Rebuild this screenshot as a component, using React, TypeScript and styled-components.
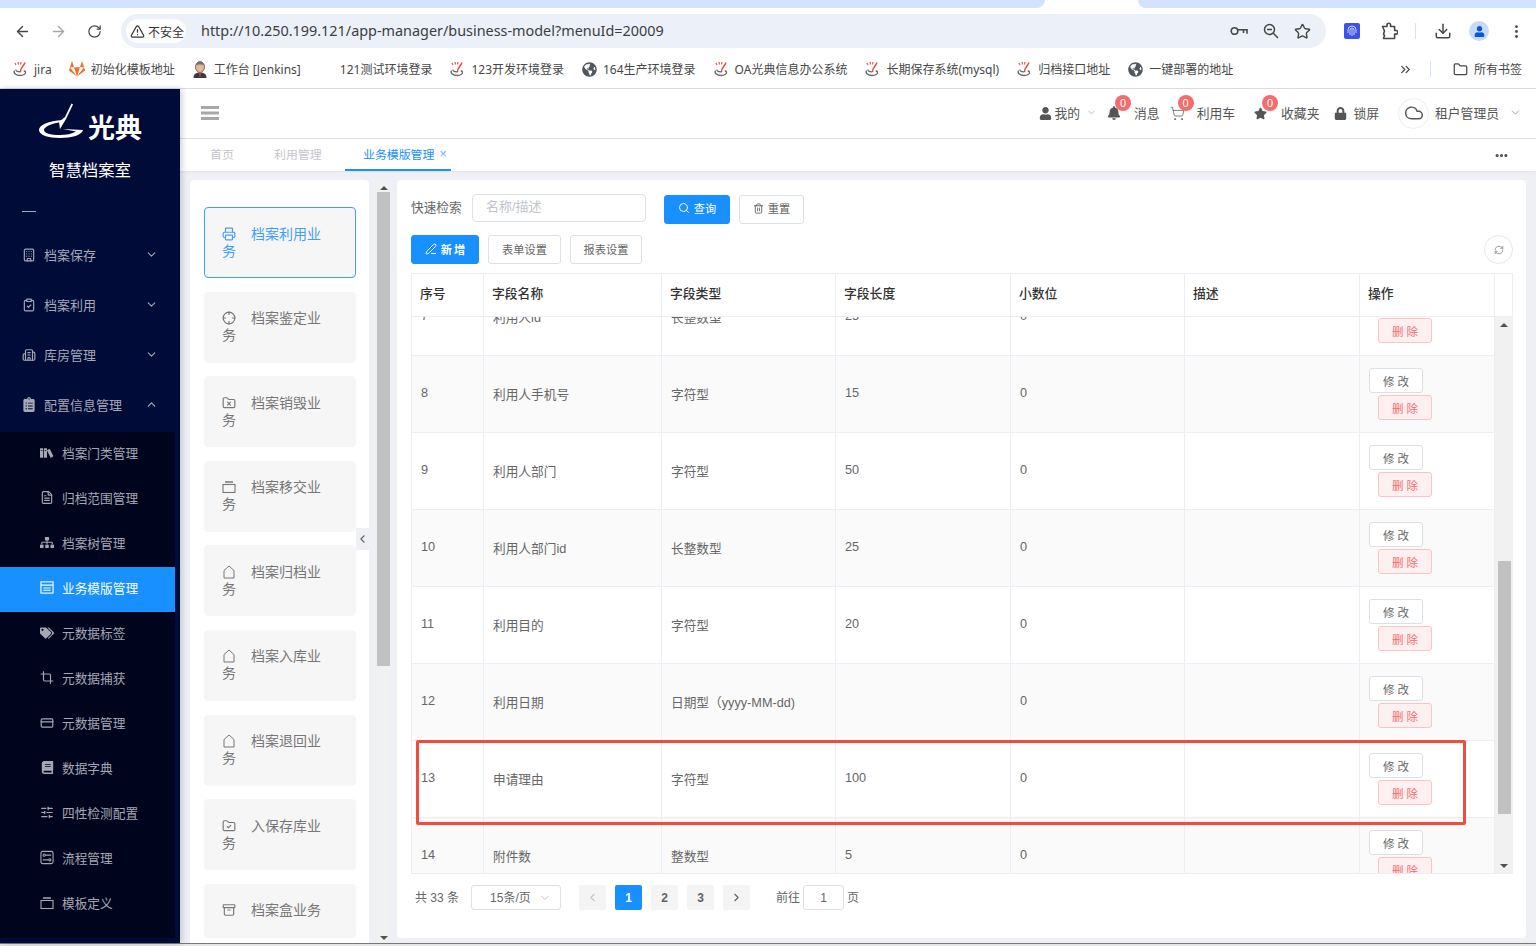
import React from "react";
import styled, { createGlobalStyle } from "styled-components";
import {
  ArrowLeft,
  ArrowRight,
  Archive,
  Building,
  Building2,
  ChevronDown,
  ChevronLeft,
  ChevronRight,
  ChevronUp,
  ChevronsRight,
  ClipboardCheck,
  Crop,
  CreditCard,
  Crosshair,
  Cloud,
  Download,
  Ellipsis,
  EllipsisVertical,
  FileText,
  Folder,
  FolderCheck,
  FolderX,
  PenLine,
  Printer,
  RefreshCw,
  RotateCw,
  Search,
  ShoppingCart,
  SlidersHorizontal,
  Star,
  Trash2,
  TriangleAlert,
} from "lucide-react";
import { FaBell, FaBook, FaClipboardList, FaGitlab, FaGlobeAmericas, FaLock, FaSitemap, FaStar, FaTags, FaUser } from "react-icons/fa";
import { ImBooks } from "react-icons/im";

const CJK = `"Liberation Sans", "Noto Sans CJK SC", sans-serif`;

const GlobalStyle = createGlobalStyle`
  html, body {
    margin: 0;
    padding: 0;
    background: #fff;
  }
  body {
    font-family: ${CJK};
    overflow: hidden;
  }
  * {
    box-sizing: border-box;
  }
`;

function SwirlIcon() {
  return (
    <svg width="16" height="16" viewBox="0 0 16 16" fill="none">
      <path d="M3 2l1 2M6 1l.5 2.500M9 1L8.500 3.500" stroke="#e2504a" strokeWidth="1.2" />
      <path d="M13 1.500C12 5 8 7 8.500 11" stroke="#e2504a" strokeWidth="1.5" />
      <path d="M2.500 9.500C1 12 4 14.500 8 14.500c3.500 0 6-1.500 5.500-3.500-.2-.8-1-1-1.800-1M4 8.500c-.5 1.800 2 2.500 4.500 2.300" stroke="#666" strokeWidth="1.300" />
    </svg>
  );
}

function JenkinsIcon() {
  return (
    <svg width="16" height="17" viewBox="0 0 16 17">
      <path d="M1.500 17c0-4 2.500-5.500 6.500-5.500s6.500 1.500 6.500 5.500z" fill="#3c3a3e" />
      <path d="M7 11.500h2L8.500 16h-1z" fill="#c8413b" />
      <ellipse cx="8" cy="6" rx="4.500" ry="5.500" fill="#e3b89a" stroke="#6b5548" strokeWidth="0.8" />
      <path d="M4 4.500C4.500 1.500 6 .5 8 .5s3.500 1 4 4C10 3 6 3 4 4.500z" fill="#77706a" />
    </svg>
  );
}

function GlobeIcon() {
  return <FaGlobeAmericas size={15} color="#50555b" />;
}

function ChromeKeyIcon() {
  return (
    <svg width="18" height="12" viewBox="0 0 18 12" fill="none" stroke="currentColor" strokeWidth="1.600">
      <circle cx="4.500" cy="6" r="3.300" />
      <path d="M8 4.800h9v4M13.500 5v3" />
    </svg>
  );
}

function ChromeZoomIcon() {
  return (
    <svg width="16" height="16" viewBox="0 0 16 16" fill="none" stroke="currentColor" strokeWidth="1.500">
      <circle cx="6.500" cy="6.500" r="5" />
      <path d="M10.300 10.300L15 15M4 6.500h5" />
    </svg>
  );
}

function ChromePuzzleIcon() {
  return (
    <svg width="18" height="18" viewBox="0 0 18 18" fill="none" stroke="currentColor" strokeWidth="1.600" strokeLinejoin="round">
      <path d="M2.500 4.500H7V3a1.800 1.800 0 0 1 3.600 0v1.500h4v4H16a1.800 1.800 0 0 1 0 3.600h-1.400v4.400H3.500l1-3-1-1.500 1-3z" />
    </svg>
  );
}

function ExtensionGlyph() {
  return (
    <svg width="10" height="12" viewBox="0 0 10 12" fill="none" stroke="#cfe0ff" strokeWidth="0.9">
      <path d="M1 8V5a4 4 0 0 1 8 0v3M3 10V5a2 2 0 0 1 4 0v5M5 4v7" />
    </svg>
  );
}

function HamburgerIcon() {
  return (
    <svg width="18" height="14" viewBox="0 0 18 14" fill="#a8a8a8">
      <rect width="18" height="3" />
      <rect y="5.500" width="18" height="3" />
      <rect y="11" width="18" height="3" />
    </svg>
  );
}

function HouseIcon() {
  return (
    <svg width="14" height="14" viewBox="0 0 14 14" fill="none" stroke="currentColor" strokeWidth="1">
      <path d="M2 13V5.500L7 1l5 4.500V13z" strokeLinejoin="round" />
    </svg>
  );
}

function TrayIcon() {
  return (
    <svg width="14" height="14" viewBox="0 0 14 14" fill="none" stroke="currentColor" strokeWidth="1.100">
      <rect x="1" y="4.500" width="12" height="8" />
      <path d="M3 2h8" strokeWidth="1.500" />
    </svg>
  );
}

function ModelIcon() {
  return (
    <svg width="15" height="15" viewBox="0 0 15 15" fill="none" stroke="currentColor" strokeWidth="1.200">
      <rect x="1" y="1.500" width="13" height="12" />
      <path d="M1 5h13M3.500 8h8M3.500 10.500h8" />
    </svg>
  );
}

function FlowIcon() {
  return (
    <svg width="15" height="15" viewBox="0 0 15 15" fill="none" stroke="currentColor" strokeWidth="1.200">
      <rect x="1" y="1" width="13" height="13" rx="2" />
      <circle cx="4.500" cy="5" r="1.200" />
      <circle cx="10.500" cy="10" r="1.200" />
      <path d="M6 5h6M3 10h6" />
    </svg>
  );
}

function BrandMark() {
  return (
    <svg width="48" height="40" viewBox="0 0 48 40" fill="#fff">
      <path d="M27 18C12 19 3 23 3 28c0 5 9 8 21 8s22-3 23-8l-20-1 13 2.500C36 32 30 33 24 33c-10 0-16-2-16-5 0-3 7-7 19-8z" />
      <path d="M35.500 1.500L37 2.500 30 17l-6 10-1-7 6-5z" />
    </svg>
  );
}

const bookmarks: { icon: React.ReactNode; label: string }[] = [
  { icon: <SwirlIcon />, label: "jira" },
  { icon: <FaGitlab size={16} color="#ee6f2b" />, label: "初始化模板地址" },
  { icon: <JenkinsIcon />, label: "工作台 [Jenkins]" },
  { icon: null, label: "121测试环境登录" },
  { icon: <SwirlIcon />, label: "123开发环境登录" },
  { icon: <GlobeIcon />, label: "164生产环境登录" },
  { icon: <SwirlIcon />, label: "OA光典信息办公系统" },
  { icon: <SwirlIcon />, label: "长期保存系统(mysql)" },
  { icon: <SwirlIcon />, label: "归档接口地址" },
  { icon: <GlobeIcon />, label: "一键部署的地址" },
];

const mainMenu = [
  { icon: <Building size={16} />, label: "档案保存", open: false },
  { icon: <ClipboardCheck size={16} />, label: "档案利用", open: false },
  { icon: <Building2 size={16} />, label: "库房管理", open: false },
  { icon: <FaClipboardList size={15} />, label: "配置信息管理", open: true },
];

const subMenu = [
  { icon: <ImBooks size={16} />, label: "档案门类管理" },
  { icon: <FileText size={15} />, label: "归档范围管理" },
  { icon: <FaSitemap size={15} />, label: "档案树管理" },
  { icon: <ModelIcon />, label: "业务模版管理", active: true },
  { icon: <FaTags size={16} />, label: "元数据标签" },
  { icon: <Crop size={15} />, label: "元数据捕获" },
  { icon: <CreditCard size={16} />, label: "元数据管理" },
  { icon: <FaBook size={13} />, label: "数据字典" },
  { icon: <SlidersHorizontal size={15} />, label: "四性检测配置" },
  { icon: <FlowIcon />, label: "流程管理" },
  { icon: <TrayIcon />, label: "模板定义" },
];

const businessCards = [
  { icon: <Printer size={14} />, label: "档案利用业务", active: true },
  { icon: <Crosshair size={14} />, label: "档案鉴定业务" },
  { icon: <FolderX size={14} />, label: "档案销毁业务" },
  { icon: <TrayIcon />, label: "档案移交业务" },
  { icon: <HouseIcon />, label: "档案归档业务" },
  { icon: <HouseIcon />, label: "档案入库业务" },
  { icon: <HouseIcon />, label: "档案退回业务" },
  { icon: <FolderCheck size={14} />, label: "入保存库业务" },
  { icon: <Archive size={14} />, label: "档案盒业务" },
];

const columns = ["序号", "字段名称", "字段类型", "字段长度", "小数位", "描述", "操作"];
const columnWidths = [72, 178, 174, 175, 174, 175, 135];

const fields = [
  { no: 7, name: "利用人id", type: "长整数型", length: "25" },
  { no: 8, name: "利用人手机号", type: "字符型", length: "15" },
  { no: 9, name: "利用人部门", type: "字符型", length: "50" },
  { no: 10, name: "利用人部门id", type: "长整数型", length: "25" },
  { no: 11, name: "利用目的", type: "字符型", length: "20" },
  { no: 12, name: "利用日期", type: "日期型（yyyy-MM-dd)", length: "" },
  { no: 13, name: "申请理由", type: "字符型", length: "100" },
  { no: 14, name: "附件数", type: "整数型", length: "5" },
];

function ColGroup() {
  return (
    <colgroup>
      {columnWidths.map((w, i) => (
        <col key={i} width={w} />
      ))}
    </colgroup>
  );
}

export default function App() {
  return (
    <Page>
      <GlobalStyle />
      <TabStrip>
        <StripSegment $side="left" />
        <ActiveBrowserTab />
        <StripSegment $side="right" />
      </TabStrip>

      <Toolbar>
        <NavButton><ArrowLeft size={17} /></NavButton>
        <NavButton $dim><ArrowRight size={17} /></NavButton>
        <NavButton><RotateCw size={15} /></NavButton>
        <AddressBar>
          <SecurityChip>
            <TriangleAlert size={15} />
            不安全
          </SecurityChip>
          <UrlText>http://10.250.199.121/app-manager/business-model?menuId=20009</UrlText>
          <AddressIcons>
            <ChromeKeyIcon />
            <ChromeZoomIcon />
            <Star size={17} />
          </AddressIcons>
        </AddressBar>
        <ToolbarIcons>
          <ExtensionBadge><ExtensionGlyph /></ExtensionBadge>
          <ChromePuzzleIcon />
          <ToolbarDivider />
          <Download size={18} />
          <ProfileBubble><FaUser size={11} /></ProfileBubble>
          <EllipsisVertical size={17} />
        </ToolbarIcons>
      </Toolbar>

      <BookmarkBar>
        {bookmarks.map((b) => (
          <Bookmark key={b.label}>
            <BookmarkIcon>{b.icon}</BookmarkIcon>
            {b.label}
          </Bookmark>
        ))}
        <BookmarkEnd>
          <ChevronsRight size={15} />
          <ToolbarDivider />
          <Bookmark>
            <Folder size={15} />
            所有书签
          </Bookmark>
        </BookmarkEnd>
      </BookmarkBar>

      <AppFrame>
        <Sidebar>
          <BrandBlock>
            <BrandRow>
              <BrandMark />
              <BrandName>光典</BrandName>
            </BrandRow>
            <BrandTitle>智慧档案室</BrandTitle>
          </BrandBlock>
          <SideDash />
          {mainMenu.map((m) => (
            <MenuItem key={m.label}>
              <MenuIcon>{m.icon}</MenuIcon>
              <MenuLabel>{m.label}</MenuLabel>
              {m.open ? <ChevronUp size={13} /> : <ChevronDown size={13} />}
            </MenuItem>
          ))}
          <SubMenu>
            {subMenu.map((s) => (
              <SubItem key={s.label} $active={s.active}>
                <MenuIcon>{s.icon}</MenuIcon>
                {s.label}
              </SubItem>
            ))}
          </SubMenu>
        </Sidebar>

        <MainColumn>
          <TopBar>
            <HamburgerIcon />
            <TopActions>
              <TopAction $gap={2}>
                <FaUser size={13} />
                <span>我的</span>
                <AccountChevron><ChevronDown size={11} strokeWidth={1.5} /></AccountChevron>
              </TopAction>
              <TopAction $offset={10} $gap={13}>
                <FaBell size={14} />
                <Badge>0</Badge>
                <span>消息</span>
              </TopAction>
              <TopAction $offset={10} $gap={12}>
                <ShoppingCart size={15} strokeWidth={1.2} />
                <Badge>0</Badge>
                <span>利用车</span>
              </TopAction>
              <TopAction $offset={19} $gap={14}>
                <FaStar size={13} />
                <Badge>0</Badge>
                <span>收藏夹</span>
              </TopAction>
              <TopAction $offset={15}>
                <FaLock size={13} />
                <span>锁屏</span>
              </TopAction>
              <TopAction $offset={19} $gap={6}>
                <AvatarCircle><Cloud size={20} strokeWidth={1.8} /></AvatarCircle>
                <span>租户管理员</span>
                <AccountChevron><ChevronDown size={13} strokeWidth={1.5} /></AccountChevron>
              </TopAction>
            </TopActions>
          </TopBar>

          <PageTabs>
            <PageTab $width={64}>首页</PageTab>
            <PageTab $width={71}>利用管理</PageTab>
            <PageTab $width={106} $active>
              业务模版管理
              <TabClose>×</TabClose>
            </PageTab>
            <TabMore><Ellipsis size={15} strokeWidth={3} /></TabMore>
          </PageTabs>

          <Content>
            <BusinessPanel>
              {businessCards.map((c) => (
                <BusinessCard key={c.label} $active={c.active}>
                  <CardIcon>{c.icon}</CardIcon>
                  {c.label}
                </BusinessCard>
              ))}
              <CollapseHandle><ChevronLeft size={14} /></CollapseHandle>
            </BusinessPanel>

            <PanelScrollbar>
              <ArrowUp />
              <PanelThumb />
              <ArrowDown />
            </PanelScrollbar>

            <TablePanel>
              <SearchRow>
                <FieldLabel>快速检索</FieldLabel>
                <SearchInput placeholder="名称/描述" />
                <ActionButton $primary $width={66} $offset={18}>
                  <Search size={12} />
                  查询
                </ActionButton>
                <ActionButton $width={65} $offset={9}>
                  <Trash2 size={11} />
                  重置
                </ActionButton>
              </SearchRow>

              <ActionRow>
                <ActionButton $primary $width={68}>
                  <PenLine size={12} />
                  <SpacedBold>新增</SpacedBold>
                </ActionButton>
                <ActionButton $width={73} $offset={9}>表单设置</ActionButton>
                <ActionButton $width={72} $offset={9}>报表设置</ActionButton>
                <RefreshCircle><RefreshCw size={10} /></RefreshCircle>
              </ActionRow>

              <TableFrame>
                <HeadRow>
                  <GridTable>
                    <ColGroup />
                    <thead>
                      <tr>
                        {columns.map((c) => (
                          <HeadCell key={c}>{c}</HeadCell>
                        ))}
                      </tr>
                    </thead>
                  </GridTable>
                  <HeadGutter />
                </HeadRow>
                <BodyRow>
                  <BodyViewport>
                    <ScrolledTable>
                      <ColGroup />
                      <tbody>
                        {fields.map((f) => (
                          <FieldRow key={f.no} $striped={f.no % 2 === 0}>
                            <BodyCell>{f.no}</BodyCell>
                            <BodyCell>{f.name}</BodyCell>
                            <BodyCell>{f.type}</BodyCell>
                            <BodyCell>{f.length}</BodyCell>
                            <BodyCell>0</BodyCell>
                            <BodyCell />
                            <ActionCell>
                              <RowActions>
                                <EditButton>修 改</EditButton>
                                <DeleteButton>删 除</DeleteButton>
                              </RowActions>
                            </ActionCell>
                          </FieldRow>
                        ))}
                      </tbody>
                    </ScrolledTable>
                  </BodyViewport>
                  <TableScrollbar>
                    <ArrowUp />
                    <TableTrack>
                      <TableThumb />
                    </TableTrack>
                    <ArrowDown />
                  </TableScrollbar>
                </BodyRow>
              </TableFrame>

              <Pagination>
                <PagerText>共 33 条</PagerText>
                <PageSize>
                  <span>15条/页</span>
                  <ChevronDown size={12} color="#c0c4cc" />
                </PageSize>
                <PageButton $offset={18} $disabled><ChevronLeft size={13} /></PageButton>
                <PageButton $active>1</PageButton>
                <PageButton>2</PageButton>
                <PageButton>3</PageButton>
                <PageButton><ChevronRight size={13} /></PageButton>
                <PagerText $offset={26}>前往</PagerText>
                <PageJump>1</PageJump>
                <PagerText $offset={3}>页</PagerText>
              </Pagination>

              <Highlight />
            </TablePanel>
          </Content>
        </MainColumn>
      </AppFrame>
      <BottomEdge />
    </Page>
  );
}

const Page = styled.div`
  width: 1536px;
  height: 946px;
  display: flex;
  flex-direction: column;
  overflow: hidden;
`;

const TabStrip = styled.div`
  height: 8px;
  display: flex;
  background: #fff;
  flex-shrink: 0;
`;

const StripSegment = styled.div<{ $side: "left" | "right" }>`
  flex: ${(p) => (p.$side === "left" ? "0 0 1045px" : "1")};
  background: #d3e3fd;
  border-radius: ${(p) => (p.$side === "left" ? "0 0 8px 0" : "0 0 0 8px")};
`;

const ActiveBrowserTab = styled.div`
  width: 93px;
  background: #fff;
`;

const Toolbar = styled.div`
  height: 47px;
  flex-shrink: 0;
  display: flex;
  align-items: flex-start;
  padding: 6px 0 0 4px;
  background: #fff;
  color: #474747;
`;

const NavButton = styled.div<{ $dim?: boolean }>`
  width: 36px;
  height: 34px;
  display: flex;
  align-items: center;
  justify-content: center;
  color: ${(p) => (p.$dim ? "#a4a6a9" : "#474747")};
`;

const AddressBar = styled.div`
  width: 1205px;
  height: 34px;
  margin-left: 9px;
  padding: 0 15px 0 5px;
  border-radius: 17px;
  background: #ebf0f9;
  display: flex;
  align-items: center;
`;

const SecurityChip = styled.div`
  width: 60px;
  height: 24px;
  border-radius: 12px;
  background: #fff;
  display: flex;
  align-items: center;
  gap: 3px;
  padding-left: 4px;
  font-size: 12px;
  color: #333;
`;

const UrlText = styled.div`
  margin: -2px 0 0 15px;
  font-family: "Noto Sans", sans-serif;
  font-size: 14.400px;
  color: #3b3e42;
`;

const AddressIcons = styled.div`
  margin-left: auto;
  display: flex;
  align-items: center;
  gap: 15px;
`;

const ToolbarIcons = styled.div`
  height: 34px;
  margin-left: 18px;
  display: flex;
  align-items: center;

  & > svg:nth-child(2) {
    margin-left: 20px;
  }
  & > svg:nth-child(4) {
    margin-left: 18px;
  }
  & > svg:nth-child(6) {
    margin-left: 19px;
  }
`;

const ExtensionBadge = styled.div`
  width: 16px;
  height: 16px;
  border-radius: 2px;
  background: #3f51e6;
  display: flex;
  align-items: center;
  justify-content: center;
`;

const ToolbarDivider = styled.div`
  width: 1px;
  height: 16px;
  margin-left: 17px;
  background: #d3e3fd;
`;

const ProfileBubble = styled.div`
  width: 20px;
  height: 20px;
  margin-left: 17px;
  border-radius: 50%;
  background: #c9daf8;
  color: #0b57d0;
  display: flex;
  align-items: center;
  justify-content: center;
`;

const BookmarkBar = styled.div`
  height: 34px;
  flex-shrink: 0;
  display: flex;
  align-items: center;
  gap: 17px;
  padding: 0 14px 5px 12px;
  background: #fff;
  border-bottom: 1px solid #dcdcdc;
`;

const Bookmark = styled.div`
  display: flex;
  align-items: center;
  gap: 6px;
  font-family: "Noto Sans", "Noto Sans CJK SC", sans-serif;
  font-size: 12px;
  color: #474747;
  white-space: nowrap;
`;

const BookmarkIcon = styled.span`
  width: 16px;
  height: 16px;
  display: flex;
  align-items: center;
  justify-content: center;
`;

const BookmarkEnd = styled.div`
  margin-left: auto;
  display: flex;
  align-items: center;
  color: #474747;

  & > div:last-child {
    margin-left: 22px;
  }
`;

const AppFrame = styled.div`
  height: 854px;
  flex-shrink: 0;
  display: flex;
`;

const Sidebar = styled.aside`
  width: 180px;
  flex-shrink: 0;
  background: #000b38;
  color: #a5a8b4;
  display: flex;
  flex-direction: column;
  box-shadow: 2px 0 6px rgba(0, 21, 41, 0.2);
  z-index: 1;
`;

const BrandBlock = styled.div`
  height: 111px;
  padding-top: 13px;
  display: flex;
  flex-direction: column;
  align-items: center;
`;

const BrandRow = styled.div`
  height: 40px;
  display: flex;
  align-items: flex-end;
  gap: 4px;
  margin-left: -2px;
`;

const BrandName = styled.div`
  margin-bottom: -2px;
  font-size: 27px;
  line-height: 30px;
  font-weight: 700;
  color: #fff;
`;

const BrandTitle = styled.div`
  margin-top: 16px;
  font-size: 16.400px;
  line-height: 24px;
  color: #fff;
`;

const SideDash = styled.div`
  width: 14px;
  height: 1px;
  margin: 11px 0 18px 22px;
  background: #a5a8b4;
`;

const MenuItem = styled.div`
  height: 50px;
  flex-shrink: 0;
  display: flex;
  align-items: center;
  padding: 0 22px 1px;
  font-size: 13px;
`;

const MenuIcon = styled.span`
  width: 14px;
  height: 16px;
  margin-right: 8px;
  display: flex;
  align-items: center;
  justify-content: center;
`;

const MenuLabel = styled.span`
  flex: 1;
`;

const SubMenu = styled.div`
  width: 175px;
  margin-top: 2px;
  padding-bottom: 11px;
  background: #00051e;
  display: flex;
  flex-direction: column;
`;

const SubItem = styled.div<{ $active?: boolean }>`
  height: 45px;
  flex-shrink: 0;
  display: flex;
  align-items: center;
  padding: 0 0 4px 40px;
  font-size: 12.700px;
  background: ${(p) => (p.$active ? "#1890ff" : "transparent")};
  color: ${(p) => (p.$active ? "#fff" : "#a5a8b4")};
`;

const MainColumn = styled.div`
  flex: 1;
  min-width: 0;
  display: flex;
  flex-direction: column;
  background: #eef0f5;
`;

const TopBar = styled.header`
  height: 50px;
  flex-shrink: 0;
  display: flex;
  align-items: center;
  padding: 0 14px 1px 21px;
  background: #fff;
  border-bottom: 1px solid #e2e2e2;
`;

const TopActions = styled.div`
  margin-left: auto;
  display: flex;
  align-items: center;
  color: #555;
  font-size: 12.800px;
`;

const TopAction = styled.div<{ $offset?: number; $gap?: number }>`
  position: relative;
  display: flex;
  align-items: center;
  gap: ${(p) => p.$gap ?? 6}px;
  margin-left: ${(p) => p.$offset ?? 0}px;

  & > span:not(:first-child) {
    padding-bottom: 2px;
  }
`;

const Badge = styled.span`
  position: absolute;
  top: -8px;
  left: 8px;
  width: 16px;
  height: 16px;
  border-radius: 50%;
  background: #f56c6c;
  color: #fff;
  font-size: 11px;
  line-height: 16px;
  text-align: center;
`;

const AvatarCircle = styled.span`
  width: 31px;
  height: 31px;
  border-radius: 50%;
  border: 1px solid #eee;
  display: flex;
  align-items: center;
  justify-content: center;
`;

const AccountChevron = styled.span`
  display: flex;
  margin-left: 4px;
  color: #999;
`;

const PageTabs = styled.nav`
  height: 32px;
  flex-shrink: 0;
  display: flex;
  align-items: stretch;
  padding-left: 30px;
  background: #fff;
  box-shadow: 0 1px 2px rgba(0, 0, 0, 0.06);
`;

const PageTab = styled.div<{ $width: number; $active?: boolean }>`
  width: ${(p) => p.$width}px;
  padding: 0 0 1px ${(p) => (p.$active ? "18px" : "0")};
  display: flex;
  align-items: center;
  font-size: 11.900px;
  color: ${(p) => (p.$active ? "#1890ff" : "#c4c6cb")};
  border-bottom: 2px solid ${(p) => (p.$active ? "#1890ff" : "transparent")};
`;

const TabClose = styled.span`
  margin-left: 5px;
  font-size: 13px;
  color: #6fb5fb;
`;

const TabMore = styled.div`
  margin-left: auto;
  padding-right: 27px;
  display: flex;
  align-items: center;
  color: #444;
`;

const Content = styled.main`
  flex: 1;
  min-height: 0;
  display: flex;
  padding: 9px 10px 0 10px;
`;

const BusinessPanel = styled.div`
  position: relative;
  width: 179px;
  flex-shrink: 0;
  padding: 27px 13px 0 14px;
  background: #fff;
  border-radius: 4px 4px 0 0;
  overflow: hidden;
`;

const BusinessCard = styled.div<{ $active?: boolean }>`
  margin-bottom: 13.600px;
  padding: 17.500px 24px 17.500px 17px;
  font-size: 14px;
  line-height: 17px;
  border-radius: 4px;
  background: #f6f6f7;
  border: 1px solid ${(p) => (p.$active ? "#409eff" : "#f6f6f7")};
  color: ${(p) => (p.$active ? "#409eff" : "#777")};
`;

const CardIcon = styled.span`
  display: inline-flex;
  vertical-align: -2px;
  width: 14px;
  margin-right: 15px;
`;

const CollapseHandle = styled.div`
  position: absolute;
  top: 348px;
  right: 0;
  width: 13px;
  height: 22px;
  background: #eef0f5;
  color: #666;
  display: flex;
  align-items: center;
  justify-content: center;
`;

const PanelScrollbar = styled.div`
  width: 13px;
  height: 765px;
  margin: 0 7px 0 8px;
  flex-shrink: 0;
  display: flex;
  flex-direction: column;
  align-items: center;
  background: #f1f1f1;
`;

const ArrowUp = styled.div`
  width: 0;
  height: 0;
  flex-shrink: 0;
  margin: 6px 0 5px;
  border-left: 4px solid transparent;
  border-right: 4px solid transparent;
  border-bottom: 4px solid #505050;
`;

const ArrowDown = styled.div`
  width: 0;
  height: 0;
  flex-shrink: 0;
  margin: auto 0 5px;
  border-left: 4px solid transparent;
  border-right: 4px solid transparent;
  border-top: 4px solid #505050;
`;

const PanelThumb = styled.div`
  width: 13px;
  height: 474px;
  margin-top: -3px;
  flex-shrink: 0;
  background: #c1c1c1;
`;

const TablePanel = styled.section`
  position: relative;
  flex: 1;
  min-width: 0;
  height: 758px;
  padding: 14px 13px 0 14px;
  background: #fff;
  border-radius: 4px;
`;

const SearchRow = styled.div`
  height: 30px;
  display: flex;
  align-items: center;
`;

const FieldLabel = styled.label`
  width: 61px;
  padding-bottom: 5px;
  font-size: 12.700px;
  color: #666;
`;

const SearchInput = styled.input`
  width: 174px;
  height: 28px;
  margin-top: -3px;
  padding: 0 13px 2px;
  border: 1px solid #dcdfe6;
  border-radius: 4px;
  font-family: ${CJK};
  font-size: 13px;
  outline: none;

  &::placeholder {
    color: #c0c4cc;
  }
`;

const ActionRow = styled.div`
  height: 29px;
  margin-top: 11px;
  display: flex;
  align-items: center;
`;

const ActionButton = styled.button<{ $primary?: boolean; $width: number; $offset?: number }>`
  width: ${(p) => p.$width}px;
  height: 29px;
  margin-left: ${(p) => p.$offset ?? 0}px;
  padding: 0 0 2px;
  display: flex;
  align-items: center;
  justify-content: center;
  gap: 4px;
  border-radius: 3px;
  font-family: ${CJK};
  font-size: 11.200px;
  border: 1px solid ${(p) => (p.$primary ? "#1890ff" : "#dcdfe6")};
  background: ${(p) => (p.$primary ? "#1890ff" : "#fff")};
  color: ${(p) => (p.$primary ? "#fff" : "#666")};
`;

const SpacedBold = styled.span`
  letter-spacing: 2px;
  font-weight: 700;
  margin-right: -2px;
`;

const RefreshCircle = styled.div`
  width: 29px;
  height: 29px;
  margin-left: auto;
  border-radius: 50%;
  border: 1px solid #e4e6ec;
  color: #888;
  display: flex;
  align-items: center;
  justify-content: center;
`;

const TableFrame = styled.div`
  margin-top: 9px;
  height: 601px;
  border: 1px solid #ebeef5;
  border-right: 0;
  display: flex;
  flex-direction: column;
`;

const HeadRow = styled.div`
  display: flex;
  flex-shrink: 0;
`;

const GridTable = styled.table`
  width: 1083px;
  table-layout: fixed;
  border-collapse: separate;
  border-spacing: 0;
  flex-shrink: 0;
`;

const HeadCell = styled.th`
  height: 43px;
  padding: 0 0 5px 8px;
  text-align: left;
  font-size: 12.800px;
  font-weight: 500;
  color: #333;
  border-right: 1px solid #ebeef5;
  border-bottom: 1px solid #ebeef5;
`;

const HeadGutter = styled.div`
  flex: 1;
  border-right: 1px solid #ebeef5;
  border-bottom: 1px solid #ebeef5;
`;

const BodyRow = styled.div`
  flex: 1;
  min-height: 0;
  display: flex;
`;

const BodyViewport = styled.div`
  width: 1083px;
  flex-shrink: 0;
  overflow: hidden;
`;

const ScrolledTable = styled(GridTable)`
  margin-top: -38px;
`;

const FieldRow = styled.tr<{ $striped: boolean }>`
  background: ${(p) => (p.$striped ? "#fafafa" : "#fff")};
`;

const BodyCell = styled.td`
  height: 77px;
  padding: 0 0 2px 9px;
  font-size: 12.700px;
  color: #666;
  border-right: 1px solid #ebeef5;
  border-bottom: 1px solid #ebeef5;
`;

const ActionCell = styled(BodyCell)`
  padding-bottom: 0;
`;

const RowActions = styled.div`
  display: flex;
  flex-direction: column;
  align-items: flex-start;
  gap: 2px;
`;

const EditButton = styled.button`
  width: 54px;
  height: 25px;
  padding: 0;
  border: 1px solid #dcdfe6;
  border-radius: 3px;
  background: #fff;
  color: #666;
  font-family: ${CJK};
  font-size: 11.500px;
`;

const DeleteButton = styled(EditButton)`
  margin-left: 9px;
  border-color: #fbc4c4;
  background: #fef0f0;
  color: #f56c6c;
`;

const TableScrollbar = styled.div`
  flex: 1;
  display: flex;
  flex-direction: column;
  align-items: center;
  background: #f1f1f1;
`;

const TableTrack = styled.div`
  flex: 1;
  width: 100%;
  padding-top: 229px;
`;

const TableThumb = styled.div`
  width: 13px;
  height: 253px;
  margin: 0 auto;
  background: #c1c1c1;
`;

const Pagination = styled.div`
  height: 25px;
  margin-top: 11px;
  padding-left: 4px;
  display: flex;
  align-items: center;
`;

const PagerText = styled.span<{ $offset?: number }>`
  margin-left: ${(p) => p.$offset ?? 0}px;
  padding-bottom: 2px;
  font-size: 12px;
  color: #666;
`;

const PageSize = styled.div`
  width: 90px;
  height: 25px;
  margin-left: 12px;
  padding: 0 9px 0 18px;
  display: flex;
  align-items: center;
  justify-content: space-between;
  border: 1px solid #dcdfe6;
  border-radius: 3px;
  font-size: 12px;
  color: #666;

  & > span {
    padding-bottom: 2px;
  }
`;

const PageButton = styled.div<{ $active?: boolean; $disabled?: boolean; $offset?: number }>`
  width: 27px;
  height: 25px;
  margin-left: ${(p) => p.$offset ?? 9}px;
  display: flex;
  align-items: center;
  justify-content: center;
  border-radius: 2px;
  font-size: 12px;
  font-weight: 700;
  background: ${(p) => (p.$active ? "#1890ff" : "#f4f4f5")};
  color: ${(p) => (p.$active ? "#fff" : p.$disabled ? "#c0c4cc" : "#606266")};
`;

const PageJump = styled.div`
  width: 41px;
  height: 25px;
  margin-left: 3px;
  display: flex;
  align-items: center;
  justify-content: center;
  border: 1px solid #dcdfe6;
  border-radius: 3px;
  font-size: 12px;
  color: #666;
`;

const Highlight = styled.div`
  position: absolute;
  top: 560px;
  left: 19px;
  width: 1050px;
  height: 85px;
  border: 3px solid #f44b3f;
  border-radius: 2px;
  pointer-events: none;
`;

const BottomEdge = styled.div`
  height: 3px;
  flex-shrink: 0;
  background: linear-gradient(#777 0 1px, #e9e4df 1px);
`;
